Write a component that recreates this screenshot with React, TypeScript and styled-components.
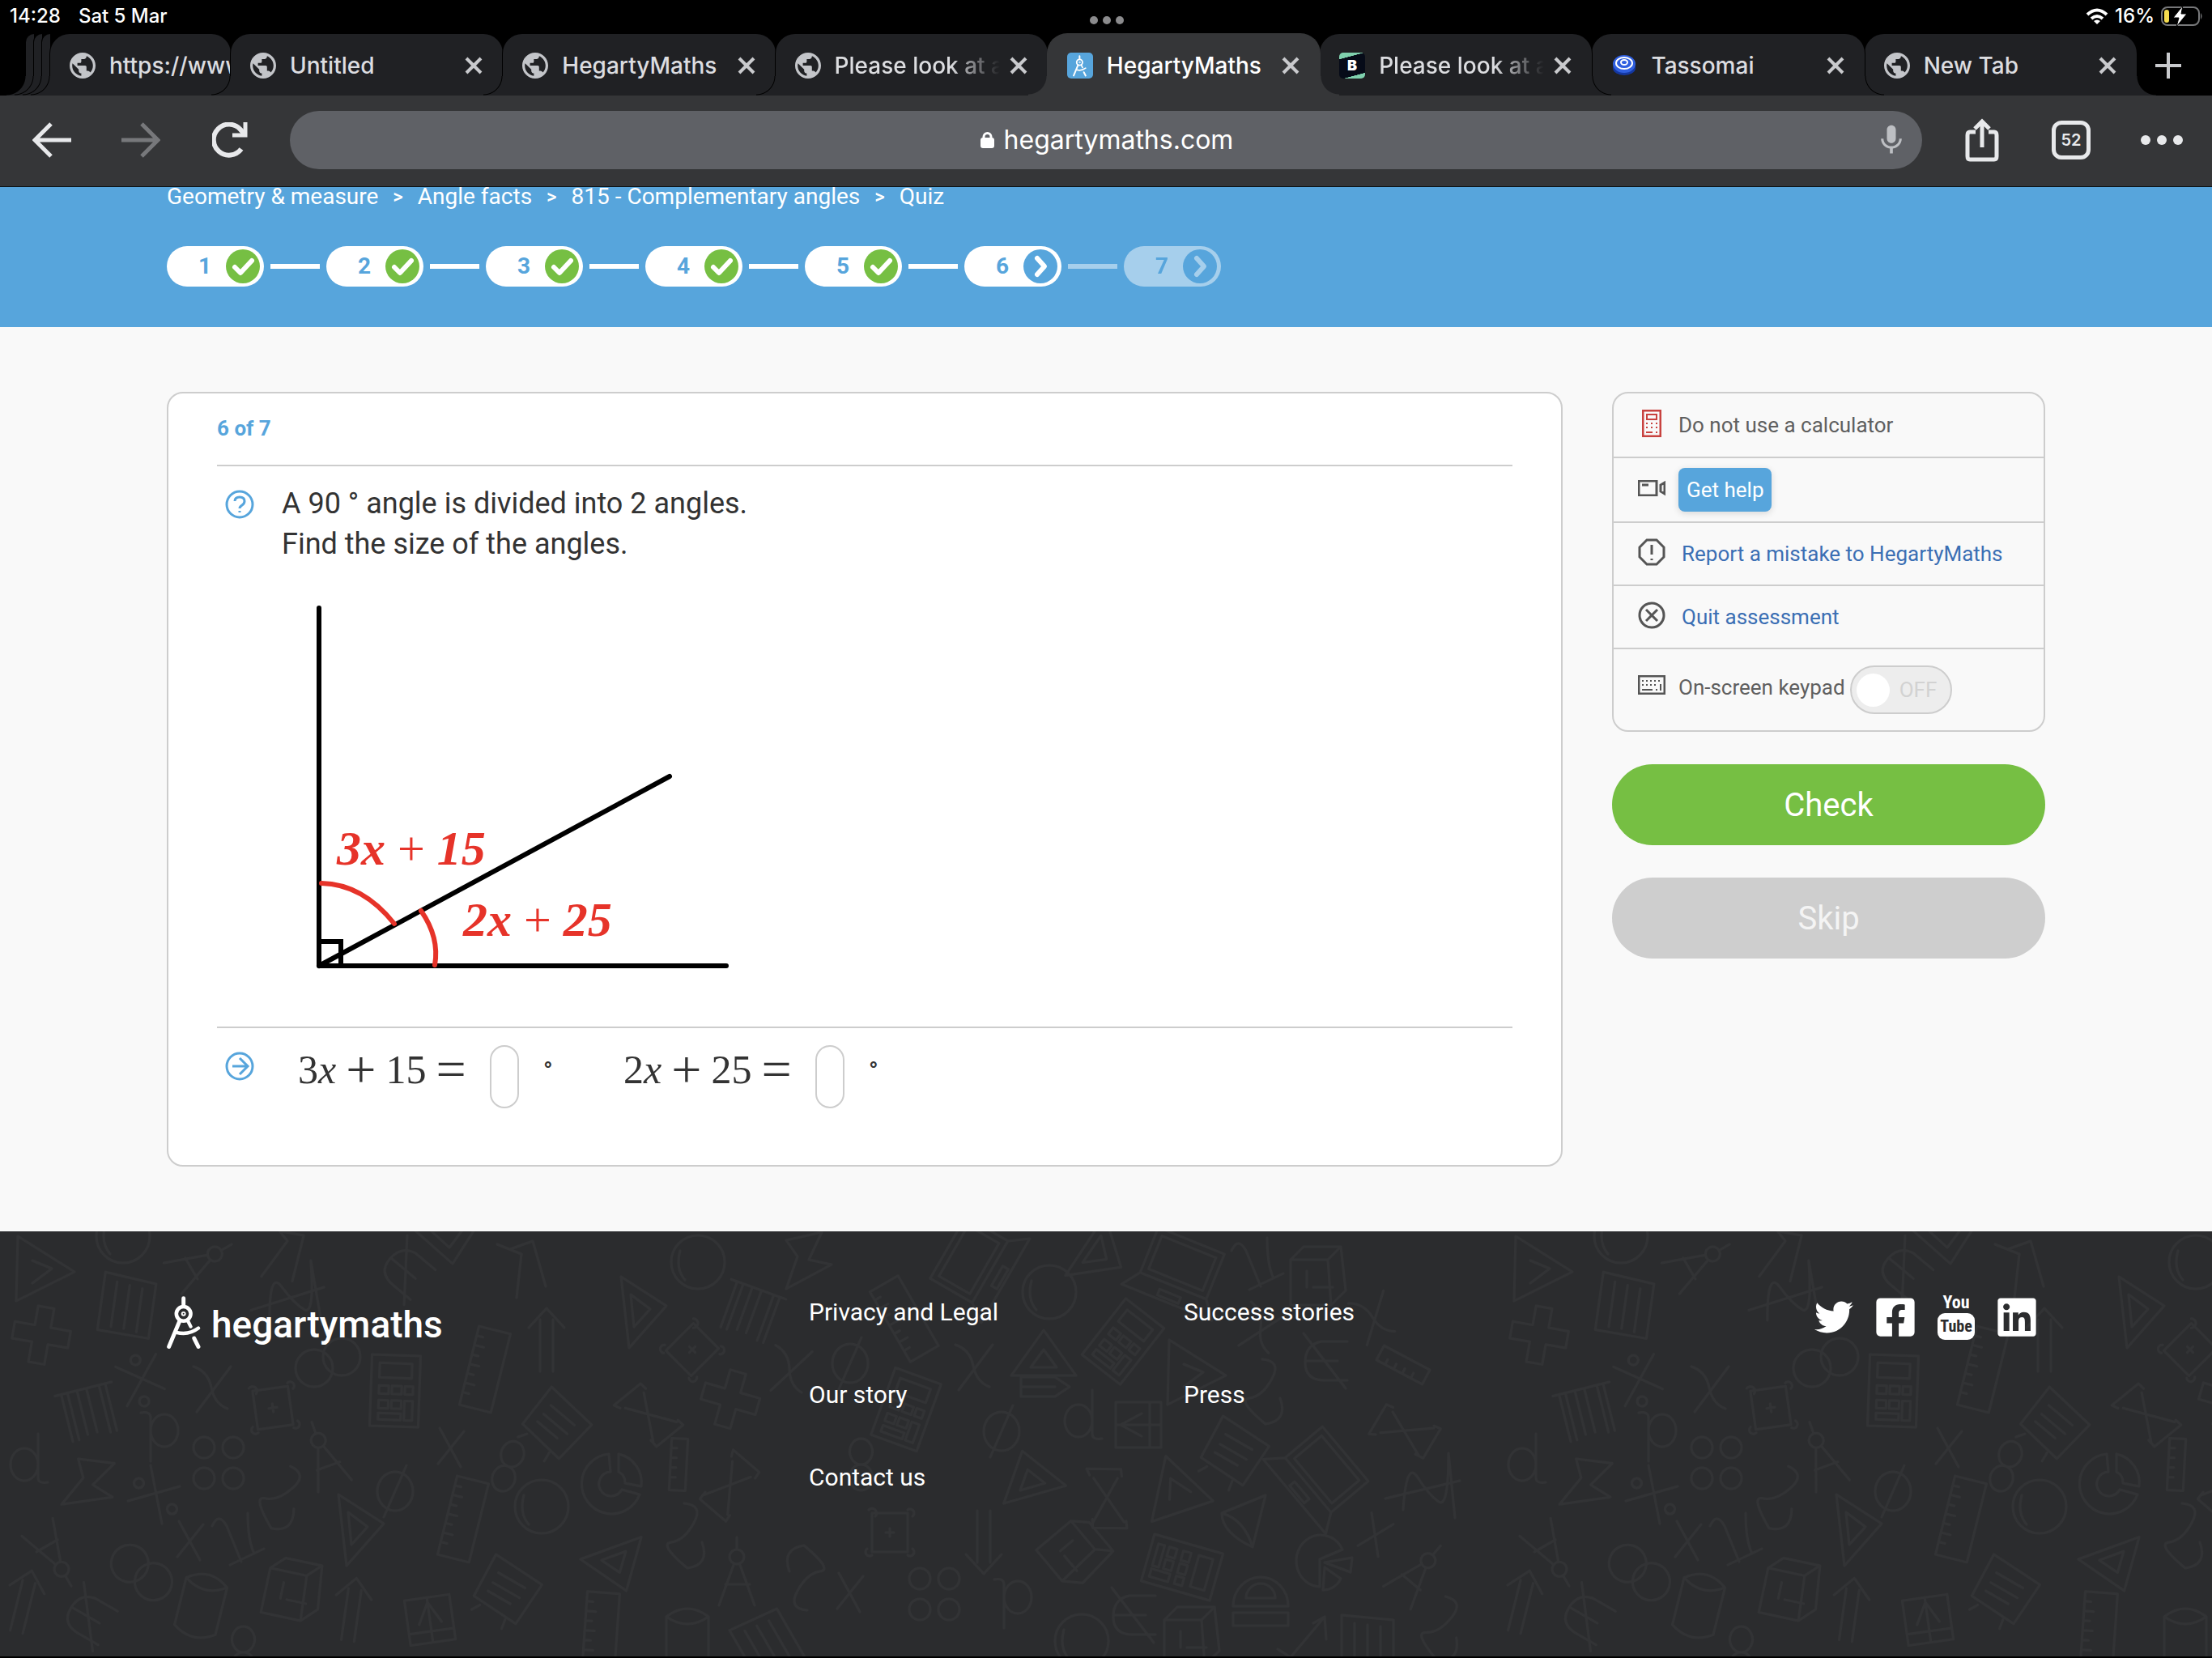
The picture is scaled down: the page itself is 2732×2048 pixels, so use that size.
import React, { useState } from "react";
import styled, { createGlobalStyle, css } from "styled-components";
import { MdPublic, MdMic } from "react-icons/md";
import { FaTwitter, FaFacebookSquare, FaLinkedin } from "react-icons/fa";

const chromeFont = `Inter, "Liberation Sans", sans-serif`;
const pageFont = `Roboto, "Liberation Sans", sans-serif`;
const mathFont = `"Liberation Serif", "Times New Roman", serif`;

const blue = "#57a5dc";
const green = "#76bf43";
const line = "#cdcdcd";

const GlobalStyle = createGlobalStyle`
  *, *::before, *::after { box-sizing: border-box; }
  body { margin: 0; background: #f9f9f9; font-family: ${pageFont}; }
  button { font: inherit; color: inherit; background: none; border: 0; padding: 0; cursor: pointer; }
  a { color: inherit; text-decoration: none; }
  svg { display: block; flex: none; }
  ul, ol { list-style: none; margin: 0; padding: 0; }
`;

const Screen = styled.div`
  display: flex;
  flex-direction: column;
  min-height: 100vh;
`;

/* ---------- device status bar ---------- */

const StatusBar = styled.div`
  display: grid;
  grid-template-columns: 1fr auto 1fr;
  align-items: center;
  height: 42px;
  padding: 0 10px 2px 12px;
  background: #000;
  color: #fff;
  font: 500 24px/30px ${chromeFont};
`;

const StatusGroup = styled.div<{ $end?: boolean }>`
  display: flex;
  align-items: center;
  justify-content: ${(p) => (p.$end ? "flex-end" : "flex-start")};
  gap: ${(p) => (p.$end ? "8px" : "22px")};
`;

const Multitask = styled.div`
  display: flex;
  gap: 6px;
  padding-top: 10px;
  i {
    width: 10px;
    height: 10px;
    border-radius: 50%;
    background: #8b8b8d;
  }
`;

/* ---------- tab strip ---------- */

const TabStrip = styled.div`
  display: flex;
  height: 76px;
  padding-left: 32px;
  background: #000;
`;

const flare = css`
  content: "";
  position: absolute;
  bottom: 0;
  width: 24px;
  height: 24px;
`;

const TabShape = styled.div<{ $bg: string; $edge: string; $z: number }>`
  position: relative;
  z-index: ${(p) => p.$z};
  border-radius: 24px 24px 0 0;
  background: ${(p) => p.$bg};
  box-shadow: 0 0 0 1px ${(p) => p.$edge};
  clip-path: inset(-1px -25px 0 -25px);
  &::before {
    ${flare}
    left: -24px;
    background: radial-gradient(circle at 0 0, transparent 22px, ${(p) => p.$edge} 23px, ${(p) => p.$bg} 24px);
  }
  &::after {
    ${flare}
    right: -24px;
    background: radial-gradient(circle at 100% 0, transparent 22px, ${(p) => p.$edge} 23px, ${(p) => p.$bg} 24px);
  }
`;

const StackedTab = styled(TabShape)`
  flex: 0 0 10px;
  border-top-right-radius: 0;
`;

const TabItem = styled(TabShape)<{ $first?: boolean }>`
  display: flex;
  align-items: center;
  flex: ${(p) => (p.$first ? "0 0 223px" : "1 1 0")};
  min-width: 0;
  padding: 2px ${(p) => (p.$first ? 0 : 25)}px 0 24px;
`;

const TabButton = styled.button<{ $active?: boolean }>`
  display: flex;
  flex: 1;
  align-items: center;
  gap: 17px;
  min-width: 0;
  color: ${(p) => (p.$active ? "#fff" : "#dcdde0")};
  font: 500 28px/36px ${chromeFont};
  text-align: left;
`;

const TabTitle = styled.span<{ $fade?: boolean }>`
  flex: 1;
  overflow: hidden;
  white-space: nowrap;
  ${(p) => p.$fade && "mask-image: linear-gradient(to right, #000 70%, transparent 100%);"}
`;

const TabClose = styled.button`
  margin-left: 12px;
`;

const NewTab = styled.button`
  display: grid;
  flex: 0 0 93px;
  place-items: center;
  padding: 2px 15px 0 0;
`;

/* ---------- toolbar ---------- */

const Toolbar = styled.div`
  display: flex;
  align-items: center;
  gap: 50px;
  height: 113px;
  padding: 0 40px 2px;
  background: #353638;
  border-bottom: 1px solid #0d1317;
`;

const ToolGroup = styled.div`
  display: flex;
  gap: 62px;
`;

const ToolButton = styled.button`
  display: grid;
  place-items: center;
  width: 48px;
  height: 54px;
`;

const TabCount = styled.button`
  width: 48px;
  height: 48px;
  margin: 3px 0;
  border: 5px solid #e8e9eb;
  border-radius: 12px;
  color: #e8e9eb;
  font: 600 20px/38px ${chromeFont};
  text-align: center;
`;

const Omnibox = styled.div`
  display: grid;
  grid-template-columns: 1fr auto 1fr;
  align-items: center;
  flex: 1;
  height: 72px;
  padding: 0 16px 0 18px;
  border-radius: 36px;
  background: #5f6166;
`;

const Address = styled.div`
  display: flex;
  align-items: center;
  gap: 12px;
  input {
    field-sizing: content;
    padding: 0;
    border: 0;
    background: none;
    color: #fff;
    font: 400 32px/44px ${chromeFont};
  }
`;

const MicButton = styled.button`
  justify-self: end;
`;

/* ---------- quiz header ---------- */

const Wrap = styled.div`
  width: 100%;
  max-width: 2400px;
  margin: 0 auto;
  padding: 0 40px;
`;

const QuizHeader = styled.header`
  overflow: hidden;
  padding-bottom: 50px;
  background: ${blue};
`;

const Crumbs = styled.ol`
  display: flex;
  gap: 18px;
  margin: -4px 0 45px;
  color: #fff;
  font-size: 28px;
  line-height: 32px;
  b {
    font-weight: 500;
    font-size: 24px;
  }
`;

const Steps = styled.ol`
  display: flex;
`;

const StepItem = styled.li<{ $muted?: boolean }>`
  display: flex;
  align-items: center;
  gap: 8px;
  opacity: ${(p) => (p.$muted ? 0.47 : 1)};
`;

const StepLink = styled.span<{ $muted?: boolean }>`
  width: 61px;
  height: 6px;
  margin-right: 8px;
  background: #fff;
  opacity: ${(p) => (p.$muted ? 0.47 : 1)};
`;

const StepPill = styled.button`
  display: flex;
  align-items: center;
  justify-content: flex-end;
  gap: 18px;
  width: 120px;
  height: 50px;
  padding-right: 5px;
  border-radius: 25px;
  background: #fff;
  color: ${blue};
  font-weight: 700;
  font-size: 28px;
  line-height: 50px;
`;

/* ---------- main area ---------- */

const Columns = styled(Wrap)`
  display: flex;
  align-items: flex-start;
  gap: 61px;
  padding-top: 80px;
  padding-bottom: 80px;
`;

const Card = styled.section`
  flex: 1;
  padding: 28px 60px 70px;
  border: 2px solid ${line};
  border-radius: 20px;
  background: #fff;
`;

const CardTitle = styled.h1`
  margin: 0;
  padding-bottom: 30px;
  color: ${blue};
  font-weight: 700;
  font-size: 26px;
  line-height: 30px;
`;

const CardSection = styled.div`
  display: flex;
  gap: 34px;
  padding: 21px 10px 0;
  border-top: 2px solid ${line};
`;

const SectionIcon = styled.div`
  padding-top: 8px;
`;

const Question = styled.div`
  color: #333;
  font-size: 36px;
  line-height: 50px;
  p {
    margin: 0;
  }
`;

const AngleLabel = styled.text`
  fill: #e63329;
  font: italic 700 60px ${mathFont};
`;

const Answers = styled.form`
  display: flex;
  padding-left: 20px;
`;

const Answer = styled.div`
  display: flex;
  min-width: 402px;
  color: #333;
`;

const Formula = styled.label`
  min-width: 237px;
  font: 400 50px/60px ${mathFont};
  white-space: nowrap;
`;

const Operator = styled.span`
  display: inline-block;
  margin: 0 12px;
  font-size: 66px;
  line-height: 0;
  vertical-align: -5px;
`;

const AnswerBox = styled.input`
  width: 36px;
  height: 78px;
  margin-right: 30px;
  padding: 0;
  border: 2px solid ${line};
  border-radius: 18px;
  background: #fff;
  font: 400 36px/40px ${mathFont};
  text-align: center;
`;

const Degree = styled.span`
  font: 700 30px/64px ${pageFont};
`;

/* ---------- side panel ---------- */

const Side = styled.aside`
  flex: 0 0 535px;
  color: #5f5f5f;
  font-size: 26px;
`;

const Panel = styled.ul`
  border: 2px solid ${line};
  border-radius: 20px;
`;

const PanelRow = styled.li<{ $h: number }>`
  display: flex;
  align-items: center;
  gap: 16px;
  height: ${(p) => p.$h}px;
  padding: 0 30px;
  border-bottom: 2px solid ${line};
  &:last-child {
    border-bottom: 0;
  }
`;

const RowIcon = styled.span<{ $lift?: boolean }>`
  display: grid;
  place-items: center;
  flex: 0 0 34px;
  padding-bottom: ${(p) => (p.$lift ? 12 : 5)}px;
`;

const PanelLink = styled.a`
  padding-left: 4px;
  color: #3b6fb4;
`;

const HelpButton = styled.button`
  height: 54px;
  padding: 0 10px;
  border-radius: 8px;
  background: ${blue};
  box-shadow: 0 2px 8px rgba(0, 0, 0, 0.14);
  color: #fff;
`;

const KeypadLabel = styled.label`
  display: flex;
  align-items: center;
  gap: 6px;
  cursor: pointer;
`;

const KeypadText = styled.span`
  padding-bottom: 6px;
`;

const KeypadSwitch = styled.span`
  display: flex;
  align-items: center;
  gap: 12px;
  width: 126px;
  height: 60px;
  padding: 0 6px;
  border: 2px solid ${line};
  border-radius: 30px;
  background: #ededed;
  color: #d2d2d2;
  input {
    appearance: none;
    width: 41px;
    height: 41px;
    margin: 0;
    border-radius: 50%;
    background: #fff;
  }
`;

const BigButton = styled.button<{ $color: string }>`
  display: block;
  width: 100%;
  height: 100px;
  margin-top: 40px;
  border-radius: 50px;
  background: ${(p) => p.$color};
  color: #fff;
  font-size: 40px;
`;

const SkipButton = styled(BigButton)`
  color: #f4f4f4;
`;

/* ---------- footer ---------- */

const Footer = styled.footer`
  position: relative;
  flex: 1;
  overflow: hidden;
  background: #2b2c2e;
  border-bottom: 2px solid #000;
  color: #fff;
`;

const Backdrop = styled.svg`
  position: absolute;
  inset: 0;
  width: 100%;
  height: 100%;
`;

const FooterGrid = styled(Wrap)`
  position: relative;
  display: grid;
  grid-template-columns: 793px 463px 1fr auto;
  align-items: start;
  padding-top: 78px;
`;

const Logo = styled.a`
  display: flex;
  gap: 13px;
  padding-top: 2px;
  font: 500 46px/70px ${pageFont};
`;

const FooterLinks = styled.ul`
  display: grid;
  gap: 66px;
  padding-top: 4px;
  font-size: 30px;
  line-height: 36px;
`;

const Social = styled.div`
  display: flex;
  gap: 25px;
  padding-right: 8px;
`;

const SocialLink = styled.a`
  display: grid;
  place-items: center;
  height: 56px;
`;

const YouTube = styled.a`
  display: grid;
  grid-template-rows: 23px 33px;
  width: 46px;
  text-align: center;
  font: 700 22px/20px "Roboto Condensed", "DejaVu Sans Condensed", sans-serif;
  span + span {
    border-radius: 9px;
    background: #fff;
    color: #2b2c2e;
    font-size: 20px;
    line-height: 32px;
  }
`;

/* ---------- drawings ---------- */

const Compass = ({ width, height, hole }: { width: number; height: number; hole: string }) => (
  <svg width={width} height={height} viewBox="78 124 128 200" fill="none" stroke="currentColor" strokeWidth="15" strokeLinecap="round">
    <path d="M141 132V162M126 218L86 314M181 282L197 314" />
    <path d="M114 260Q160 272 197 244M168 238L158 218" strokeWidth="13" />
    <circle cx="141" cy="190" r="27" strokeWidth="14" fill={hole} />
    <circle cx="141" cy="190" r="6" strokeWidth="6" />
  </svg>
);

const FaviconBox = styled.span<{ $bg: string }>`
  display: grid;
  place-items: center;
  flex: 0 0 32px;
  height: 32px;
  border-radius: 5px;
  background: ${(p) => p.$bg};
  color: #fff;
`;

const LetterIcon = styled(FaviconBox)`
  background: linear-gradient(165deg, #7fd1ae 20%, #060b18 21%, #060b18 82%, #7fd1ae 83%);
  font: 900 18px/32px ${chromeFont};
`;

type IconKind = "globe" | "hegarty" | "letter" | "swirl";

const Favicon = ({ kind }: { kind: IconKind }) => {
  if (kind === "hegarty")
    return (
      <FaviconBox $bg={blue}>
        <Compass width={17} height={27} hole={blue} />
      </FaviconBox>
    );
  if (kind === "letter")
    return (
      <LetterIcon $bg="#060b18" aria-hidden>
        B
      </LetterIcon>
    );
  if (kind === "swirl")
    return (
      <svg width="32" height="32" viewBox="0 0 32 32" fill="none">
        <ellipse cx="16" cy="19" rx="14" ry="9" fill="#1437a0" />
        <ellipse cx="16" cy="14" rx="14" ry="11" fill="#2f5fe0" />
        <ellipse cx="16" cy="13" rx="10" ry="7" stroke="#fff" strokeWidth="2" />
        <ellipse cx="16" cy="12" rx="4" ry="3" stroke="#fff" strokeWidth="2" />
      </svg>
    );
  return (
    <svg width="32" height="32" viewBox="2 2 20 20" color="#c3c5c9">
      <MdPublic size={24} />
    </svg>
  );
};

const Cross = () => (
  <svg width="22" height="22" viewBox="0 0 22 22" stroke="#c9cacd" strokeWidth="4">
    <path d="M2 2L20 20M20 2L2 20" />
  </svg>
);

const Arrow = ({ forward }: { forward?: boolean }) => (
  <svg width="48" height="44" viewBox="0 0 48 44" fill="none" stroke={forward ? "#77787b" : "#e8e9eb"} strokeWidth="5">
    {forward ? <path d="M0 22H44M25 2L45 22L25 42" /> : <path d="M48 22H4M23 2L3 22L23 42" />}
  </svg>
);

const CheckDot = () => (
  <svg width="42" height="42" viewBox="0 0 42 42">
    <circle cx="21" cy="21" r="21" fill={green} />
    <path d="M11 22L18 29L32 14" fill="none" stroke="#fff" strokeWidth="6" strokeLinecap="round" strokeLinejoin="round" />
  </svg>
);

const NextDot = () => (
  <svg width="42" height="42" viewBox="0 0 42 42">
    <circle cx="21" cy="21" r="21" fill={blue} />
    <path d="M17 11L26 21L17 31" fill="none" stroke="#fff" strokeWidth="6" strokeLinecap="round" strokeLinejoin="round" />
  </svg>
);

const Diagram = () => (
  <svg width="600" height="571" viewBox="348 697 600 571" fill="none" strokeLinecap="round" role="img" aria-label="Right angle divided into two angles">
    <g stroke="#000" strokeWidth="6">
      <path d="M394 751V1193H897" strokeLinejoin="round" />
      <path d="M394 1193L827 959" />
      <path d="M394 1163H421V1193" />
    </g>
    <g stroke="#e63329" strokeWidth="6">
      <path d="M397 1091Q448 1092 487 1141" />
      <path d="M520 1125Q543 1158 537 1192" />
    </g>
    <AngleLabel x="416" y="1068">
      3x <tspan fontWeight="400" fontStyle="normal">+</tspan> 15
    </AngleLabel>
    <AngleLabel x="572" y="1156">
      2x <tspan fontWeight="400" fontStyle="normal">+</tspan> 25
    </AngleLabel>
  </svg>
);

const doodles: Record<string, string> = {
  tri: "M-30 -36L40 8L-32 44ZM-12 -6L12 4M-12 22L12 4",
  set: "M-26 -40L30 -4L-16 48ZM-14 -18L10 0L-10 22Z",
  tri2: "M0 -34L40 22H-40ZM0 -10L16 12H-16Z",
  circle: "M33 0A33 33 0 1 1 -33 0A33 33 0 1 1 33 0M-22 -14Q-28 8 -16 22",
  plus: "M-9 -35H11V-11H36V10H11V35H-9V10H-34V-11H-9Z",
  cross: "M-14 -24L12 24M16 -20L-16 20",
  calc: "M-30 -44H30V44H-30ZM-20 -34H20V-16H-20ZM-20 -6H-8V4H-20ZM-4 -6H8V4H-4ZM12 -6H22V4H12ZM-20 12H-8V22H-20ZM-4 12H8V22H-4ZM12 12H22V36H12ZM-20 28H8V36H-20Z",
  venn: "M6 6A23 23 0 1 1 -40 6A23 23 0 1 1 6 6M40 -8A23 23 0 1 1 -6 -8A23 23 0 1 1 40 -8",
  pad: "M-30 -36L34 -30V38L-30 36ZM-14 -26V30M2 -24V30M18 -22V32",
  ruler: "M-18 -50H22V50H-18ZM-18 -38H-10M-18 -26H-6M-18 -14H-10M-18 -2H-6M-18 10H-10M-18 22H-6M-18 34H-10",
  strip: "M-10 -32H10V32H-10ZM-10 -20H-3M-10 -8H-3M-10 4H-3M-10 16H-3",
  zig: "M-30 -26L0 -14L-6 40M30 26L14 -30L-14 -20",
  bolt: "M-22 -24L22 -34L6 0L34 6L-22 36L-8 -4Z",
  arrow: "M-8 40V-24M8 40V-24M-22 -14L0 -38L22 -14",
  nodes: "M-22 -24H22V24H-22ZM-26 -28A5 5 0 1 1 -18 -20M22 -28A5 5 0 1 1 28 -20M-22 28A5 5 0 1 1 -28 20M22 28A5 5 0 1 0 28 20M-5 0H5M0 -5V5",
  empty: "M22 0A22 24 0 1 1 -22 0A22 24 0 1 1 22 0M-14 32L14 -32",
  wye: "M-22 -26Q-4 -20 0 0T20 26M24 -26L-18 30",
  wave: "M-48 12L44 -10M-26 26Q-22 -36 -8 -14T18 16T30 -44L38 36",
  compass: "M0 -44V-30M9 -20A9 9 0 1 1 -9 -20A9 9 0 1 1 9 -20M-4 -10L-22 40M4 -10L22 40M-14 14H16",
  pencil: "M-28 -12H14L32 0L14 12H-28ZM-28 0H14",
  comb: "M-36 -26H36M-28 -26V34M-20 -26V34M-8 -26V30M4 -26V30M20 -26V34M28 -26V34",
  four: "M-5 -20A13 13 0 1 1 -31 -20A13 13 0 1 1 -5 -20M31 -20A13 13 0 1 1 5 -20A13 13 0 1 1 31 -20M-5 18A13 13 0 1 1 -31 18A13 13 0 1 1 -5 18M31 18A13 13 0 1 1 5 18A13 13 0 1 1 31 18",
  cube: "M-32 -20L-16 -36H30L36 18L18 36H-32ZM-32 -20H14L30 -36M14 -20L18 36M-12 -6V14M-4 14H20",
  solid: "M-26 -30Q0 -50 26 -30V30Q0 48 -26 30ZM-26 -30Q0 -12 26 -30",
  dee: "M14 -34V20Q14 28 26 26M14 4A17 20 0 1 1 -20 4A17 20 0 1 1 14 4",
  eight: "M0 0A14 16 0 1 1 1 0A14 16 0 1 1 0 0",
  donut: "M-6 -36A37 37 0 1 0 32 14L10 8A15 15 0 1 1 -4 -14ZM6 -36A36 36 0 0 1 34 4L14 0A15 15 0 0 0 6 -14Z",
  pie: "M26 -12A30 32 0 1 0 -2 34V0ZM4 4L38 -2L36 16ZM4 10L24 24A24 24 0 0 1 2 38Z",
  euro: "M28 -24H-4Q-24 -20 -24 2T0 24H28M-24 0H16M-26 -34L26 34",
  en: "M-30 -18Q-22 -36 -12 -18L6 26M14 -34Q14 0 22 16M-8 30L34 10",
  ess: "M-4 -42Q20 -40 8 -18T-20 6T0 38Q28 34 18 6",
  percent: "M-6 -36L8 36M-34 8L30 -10M-20 -20A6 6 0 1 1 -21 -20M20 24A6 6 0 1 1 21 24",
  box: "M-36 -26L4 -40L8 -32M-36 -26L-30 -20M36 26L-4 40L-8 30M36 26L32 18M-24 -18L30 20M4 -28L-6 34",
  book: "M-28 -28H28V28H-28ZM14 -28V28M-28 0H28M-22 0L4 -14M-22 0L4 14",
  note: "M-34 -30L34 -26L30 32L-32 28ZM-20 -12H18M-20 2H18M-20 14H12M-20 34L-26 44M16 34L18 46",
  laptop: "M-44 -36H44V24H-44ZM-36 -28H36V16H-36ZM-44 24L-60 46H60L44 24M-14 34H14V42H-14Z",
  cone: "M26 -36L-28 -14Q-28 10 10 28ZM-28 -14Q0 -6 10 28",
  protractor: "M-34 10A34 36 0 0 1 34 10ZM-18 0A18 18 0 0 1 18 0ZM-34 18H34V34H-34Z",
  check: "M-30 16L-14 26L28 -24M14 -16L28 -24L30 4",
};

/* kind, x, y, rotation */
const scatter: [string, number, number, number][] = [
  ["tri", 52, 42, 0], ["circle", 152, 6, 0], ["compass", 248, 38, 60], ["zig", 348, 24, 30], ["pad", 155, 90, 8],
  ["wave", 357, 82, -4], ["plus", 50, 128, 10], ["percent", 174, 183, 40], ["wye", 261, 193, 0], ["calc", 488, 197, 2],
  ["venn", 405, 163, 0], ["euro", 501, 48, 40], ["zig", 644, 42, 0], ["circle", 862, 38, 0], ["set", 793, 96, 0],
  ["bolt", 993, 35, 0], ["laptop", 1202, 38, -60], ["circle", 1296, 75, 0], ["ruler", 597, 170, 14], ["arrow", 675, 133, 0],
  ["nodes", 855, 146, 45], ["comb", 928, 96, 20], ["ruler", 1115, 109, -30], ["wye", 975, 170, 10], ["empty", 1050, 163, 0],
  ["wye", 1202, 166, 0], ["tri2", 1289, 156, 0], ["pencil", 1289, 192, 0], ["comb", 109, 220, -14], ["nodes", 337, 218, -8],
  ["dee", 200, 250, 180], ["four", 270, 287, 0], ["compass", 400, 277, -20], ["note", 688, 237, 40], ["box", 801, 227, -20],
  ["plus", 901, 207, 16], ["calc", 1119, 220, 20], ["empty", 1237, 247, 0], ["dee", 33, 284, 0], ["bolt", 109, 311, 20],
  ["cross", 557, 267, 0], ["eight", 627, 290, 20], ["donut", 758, 311, 0], ["strip", 838, 288, 3], ["empty", 488, 321, 0],
  ["ess", 348, 331, 20], ["set", 444, 365, 0], ["ruler", 570, 355, 14], ["circle", 669, 340, 0], ["box", 901, 314, 60],
  ["eight", 1063, 288, 0], ["tri2", 1272, 304, -16], ["percent", 192, 325, 0], ["tri2", 762, 412, 160], ["ess", 849, 378, 0],
  ["en", 292, 382, 0], ["cross", 235, 382, 0], ["venn", 174, 422, 60], ["cube", 361, 442, 12], ["solid", 248, 463, 14],
  ["arrow", 435, 466, 8], ["book", 531, 480, 82], ["note", 627, 442, 30], ["compass", 910, 422, 0], ["ess", 993, 426, 180],
  ["nodes", 1099, 372, 0], ["four", 1154, 449, 0], ["arrow", 1215, 385, 180], ["cube", 1328, 395, 50], ["arrow", 30, 456, 14],
  ["euro", 109, 476, 30], ["ruler", 740, 496, 4], ["solid", 849, 506, 0], ["pad", 945, 509, -30], ["cross", 1050, 446, 0],
  ["dee", 1254, 456, 180], ["eight", 300, 520, 0], ["laptop", 1458, 45, 22], ["en", 1551, 42, 0], ["cube", 1626, 55, 0],
  ["set", 1359, 28, 40], ["calc", 1387, 136, 38], ["tri", 1474, 170, 0], ["wye", 1557, 119, 20], ["ess", 1563, 200, 0],
  ["euro", 1636, 160, 0], ["wye", 1695, 106, -20], ["strip", 1733, 165, -62], ["box", 1735, 247, -40], ["book", 1406, 239, 0],
  ["note", 1525, 271, 30], ["laptop", 1634, 298, 50], ["wave", 1759, 318, 0], ["box", 1367, 330, 20], ["tri", 1446, 318, 250],
  ["cone", 1537, 362, 0], ["calc", 1460, 415, 106], ["pie", 1632, 405, 0], ["cross", 1699, 375, 20], ["compass", 1751, 422, 40],
  ["protractor", 1557, 453, 0], ["euro", 1399, 474, 0], ["cube", 1470, 500, 0], ["check", 1608, 500, 0], ["pad", 1687, 510, 0],
  ["ess", 1782, 493, 10], ["circle", 1336, 506, 0], ["compass", 66, 400, 150], ["set", 555, 10, 90], ["dee", 1335, 230, 0],
];

const FooterPattern = () => (
  <Backdrop aria-hidden>
    <defs>
      <pattern id="doodles" width="1850" height="526" patternUnits="userSpaceOnUse">
        <g fill="none" stroke="#323335" strokeWidth="3" strokeLinecap="round" strokeLinejoin="round">
          {scatter.map(([kind, x, y, turn], i) => (
            <path key={i} d={doodles[kind]} transform={`translate(${x} ${y}) rotate(${turn})`} />
          ))}
        </g>
      </pattern>
    </defs>
    <rect width="100%" height="100%" fill="url(#doodles)" />
  </Backdrop>
);

/* ---------- page ---------- */

interface TabInfo {
  title: string;
  icon: IconKind;
  first?: boolean;
  active?: boolean;
  fade?: boolean;
}

const tabs: TabInfo[] = [
  { title: "https://www.", icon: "globe", first: true },
  { title: "Untitled", icon: "globe" },
  { title: "HegartyMaths", icon: "globe" },
  { title: "Please look at a", icon: "globe", fade: true },
  { title: "HegartyMaths", icon: "hegarty", active: true },
  { title: "Please look at a", icon: "letter", fade: true },
  { title: "Tassomai", icon: "swirl" },
  { title: "New Tab", icon: "globe" },
];

const crumbs = ["Geometry & measure", "Angle facts", "815 - Complementary angles", "Quiz"];

const Browser = () => (
  <>
    <StatusBar>
      <StatusGroup>
        <span>14:28</span>
        <span>Sat 5 Mar</span>
      </StatusGroup>
      <Multitask>
        <i />
        <i />
        <i />
      </Multitask>
      <StatusGroup $end>
        <svg width="28" height="20" viewBox="0 0 28 20" fill="none" stroke="#fff" strokeWidth="4">
          <path d="M2 8Q14 -3 26 8M7 13Q14 7 21 13" />
          <path d="M14 20L10 16Q14 13 18 16Z" fill="#fff" stroke="none" />
        </svg>
        <span>16%</span>
        <svg width="53" height="26" viewBox="0 0 53 26">
          <rect x="1" y="2" width="46" height="22" rx="7" fill="none" stroke="#77787a" strokeWidth="2" />
          <path d="M49 9Q52 13 49 17Z" fill="#77787a" />
          <rect x="4" y="5" width="6" height="16" rx="3" fill="#f5dc4f" />
          <path d="M27 0L15 15H22L19 26L32 10H25Z" fill="#fff" stroke="#000" strokeWidth="1" />
        </svg>
      </StatusGroup>
    </StatusBar>
    <TabStrip>
      {[0, 1, 2].map((n) => (
        <StackedTab key={n} $bg="#202124" $edge="#000" $z={n} />
      ))}
      {tabs.map((t, i) => (
        <TabItem
          key={i}
          $first={t.first}
          $bg={t.active ? "#353638" : "#202124"}
          $edge={t.active ? "#353638" : "#000"}
          $z={t.active ? 20 : i < 4 ? i + 4 : 19 - i}
        >
          <TabButton $active={t.active}>
            <Favicon kind={t.icon} />
            <TabTitle $fade={t.fade}>{t.title}</TabTitle>
          </TabButton>
          {!t.first && (
            <TabClose aria-label="Close tab">
              <Cross />
            </TabClose>
          )}
        </TabItem>
      ))}
      <NewTab aria-label="New tab">
        <svg width="32" height="32" viewBox="0 0 32 32" stroke="#c9cacd" strokeWidth="4">
          <path d="M16 0V32M0 16H32" />
        </svg>
      </NewTab>
    </TabStrip>
    <Toolbar>
      <ToolGroup>
        <ToolButton aria-label="Back">
          <Arrow />
        </ToolButton>
        <ToolButton aria-label="Forward" disabled>
          <Arrow forward />
        </ToolButton>
        <ToolButton aria-label="Reload">
          <svg width="44" height="44" viewBox="0 0 44 44" fill="none" stroke="#e8e9eb" strokeWidth="6">
            <path d="M36 33A19 19 0 1 1 35 9L41 16" />
            <path d="M41 0V16H25" strokeWidth="5" />
          </svg>
        </ToolButton>
      </ToolGroup>
      <Omnibox>
        <span />
        <Address>
          <svg width="17" height="20" viewBox="0 0 17 20">
            <rect y="7" width="17" height="13" rx="3" fill="#fff" />
            <path d="M4 8V6A4 4 0 0 1 13 6V8" fill="none" stroke="#fff" strokeWidth="3" />
          </svg>
          <input aria-label="Address" defaultValue="hegartymaths.com" />
        </Address>
        <MicButton aria-label="Voice search">
          <MdMic size={44} color="#bdbfc3" />
        </MicButton>
      </Omnibox>
      <ToolGroup>
        <ToolButton aria-label="Share">
          <svg width="42" height="54" viewBox="0 0 42 54" fill="none" stroke="#e8e9eb" strokeWidth="5">
            <path d="M13 17H6Q3 17 3 21V47Q3 51 6 51H36Q39 51 39 47V21Q39 17 36 17H29M21 36V4M12 13L21 4L30 13" />
          </svg>
        </ToolButton>
        <TabCount aria-label="Open tabs">52</TabCount>
        <ToolButton aria-label="Menu">
          <svg width="52" height="12" viewBox="0 0 52 12" fill="#e8e9eb">
            <circle cx="6" cy="6" r="6" />
            <circle cx="26" cy="6" r="6" />
            <circle cx="46" cy="6" r="6" />
          </svg>
        </ToolButton>
      </ToolGroup>
    </Toolbar>
  </>
);

const SidePanel = () => {
  const [keypad, setKeypad] = useState(false);
  return (
    <Side>
      <Panel>
        <PanelRow $h={80}>
          <RowIcon>
            <svg width="24" height="34" viewBox="0 0 24 34" fill="none" stroke="#c8423f" strokeWidth="3">
              <rect x="1" y="1" width="22" height="32" />
              <rect x="6" y="6" width="12" height="6" strokeWidth="2" />
              <path d="M5 17H19M5 22H19" strokeDasharray="2 4" strokeWidth="2" />
              <path d="M5 28H13M17 28H19" strokeWidth="2" />
            </svg>
          </RowIcon>
          <span>Do not use a calculator</span>
        </PanelRow>
        <PanelRow $h={80}>
          <RowIcon>
            <svg width="34" height="20" viewBox="0 0 34 20" fill="none" stroke="#555" strokeWidth="3">
              <path d="M1 1H23V19H1ZM5 6H13M33 3V17L28 14V6Z" />
            </svg>
          </RowIcon>
          <HelpButton>Get help</HelpButton>
        </PanelRow>
        <PanelRow $h={78}>
          <RowIcon>
            <svg width="34" height="34" viewBox="0 0 34 34" fill="none" stroke="#555" strokeWidth="3">
              <path d="M11 2H23L32 11V23L23 32H11L2 23V11ZM17 8V20M17 25V27" />
            </svg>
          </RowIcon>
          <PanelLink href="#report">Report a mistake to HegartyMaths</PanelLink>
        </PanelRow>
        <PanelRow $h={78}>
          <RowIcon>
            <svg width="34" height="34" viewBox="0 0 34 34" fill="none" stroke="#555" strokeWidth="3">
              <circle cx="17" cy="17" r="15" />
              <path d="M10 10L24 24M24 10L10 24" />
            </svg>
          </RowIcon>
          <PanelLink href="#quit">Quit assessment</PanelLink>
        </PanelRow>
        <PanelRow $h={100}>
          <RowIcon $lift>
            <svg width="34" height="24" viewBox="0 0 34 24" fill="none" stroke="#555" strokeWidth="2">
              <path d="M1 1H33V23H1Z" strokeWidth="3" />
              <path d="M5 7H29M5 12H25" strokeDasharray="2 3" />
              <path d="M5 18H18M22 18H24M28 11V19" />
            </svg>
          </RowIcon>
          <KeypadLabel>
            <KeypadText>On-screen keypad</KeypadText>
            <KeypadSwitch>
              <input type="checkbox" checked={keypad} onChange={(e) => setKeypad(e.target.checked)} />
              {keypad ? "ON" : "OFF"}
            </KeypadSwitch>
          </KeypadLabel>
        </PanelRow>
      </Panel>
      <BigButton $color={green}>Check</BigButton>
      <SkipButton $color="#cecece">Skip</SkipButton>
    </Side>
  );
};

const answers = [
  { id: "first", lead: "3", rest: "15" },
  { id: "second", lead: "2", rest: "25" },
];

export default function App() {
  return (
    <Screen>
      <GlobalStyle />
      <Browser />
      <QuizHeader>
        <Wrap>
          <Crumbs>
            {crumbs.map((c, i) => (
              <React.Fragment key={c}>
                {i > 0 && <b aria-hidden>&gt;</b>}
                <li>
                  <a href="#topic">{c}</a>
                </li>
              </React.Fragment>
            ))}
          </Crumbs>
          <Steps>
            {[1, 2, 3, 4, 5, 6, 7].map((n) => (
              <StepItem key={n} $muted={n === 7}>
                <StepPill>
                  {n}
                  {n < 6 ? <CheckDot /> : <NextDot />}
                </StepPill>
                {n < 7 && <StepLink $muted={n === 6} />}
              </StepItem>
            ))}
          </Steps>
        </Wrap>
      </QuizHeader>
      <Columns as="main">
        <Card>
          <CardTitle>6 of 7</CardTitle>
          <CardSection>
            <SectionIcon>
              <svg width="36" height="36" viewBox="0 0 36 36" fill="none" stroke={blue} strokeWidth="3">
                <circle cx="18" cy="18" r="16" />
                <path d="M12 14Q12 9 18 9T24 14Q24 17 21 19T18 23M18 26V28" />
              </svg>
            </SectionIcon>
            <Question>
              <p>A 90 ° angle is divided into 2 angles.</p>
              <p>Find the size of the angles.</p>
              <Diagram />
            </Question>
          </CardSection>
          <CardSection>
            <SectionIcon>
              <svg width="36" height="36" viewBox="0 0 36 36" fill="none" stroke={blue} strokeWidth="3">
                <circle cx="18" cy="18" r="16" />
                <path d="M9 18H27M18 8L28 18L18 28" />
              </svg>
            </SectionIcon>
            <Answers>
              {answers.map((a) => (
                <Answer key={a.id}>
                  <Formula htmlFor={a.id}>
                    {a.lead}
                    <i>x</i>
                    <Operator>+</Operator>
                    {a.rest}
                    <Operator>=</Operator>
                  </Formula>
                  <AnswerBox id={a.id} />
                  <Degree>°</Degree>
                </Answer>
              ))}
            </Answers>
          </CardSection>
        </Card>
        <SidePanel />
      </Columns>
      <Footer>
        <FooterPattern />
        <FooterGrid>
          <Logo href="#home">
            <Compass width={42} height={66} hole="#2b2c2e" />
            hegartymaths
          </Logo>
          <FooterLinks>
            <li><a href="#legal">Privacy and Legal</a></li>
            <li><a href="#story">Our story</a></li>
            <li><a href="#contact">Contact us</a></li>
          </FooterLinks>
          <FooterLinks>
            <li><a href="#stories">Success stories</a></li>
            <li><a href="#press">Press</a></li>
          </FooterLinks>
          <Social>
            <SocialLink href="#twitter" aria-label="Twitter">
              <FaTwitter size={48} />
            </SocialLink>
            <SocialLink href="#facebook" aria-label="Facebook">
              <FaFacebookSquare size={54} />
            </SocialLink>
            <YouTube href="#youtube">
              <span>You</span>
              <span>Tube</span>
            </YouTube>
            <SocialLink href="#linkedin" aria-label="LinkedIn">
              <FaLinkedin size={54} />
            </SocialLink>
          </Social>
        </FooterGrid>
      </Footer>
    </Screen>
  );
}
